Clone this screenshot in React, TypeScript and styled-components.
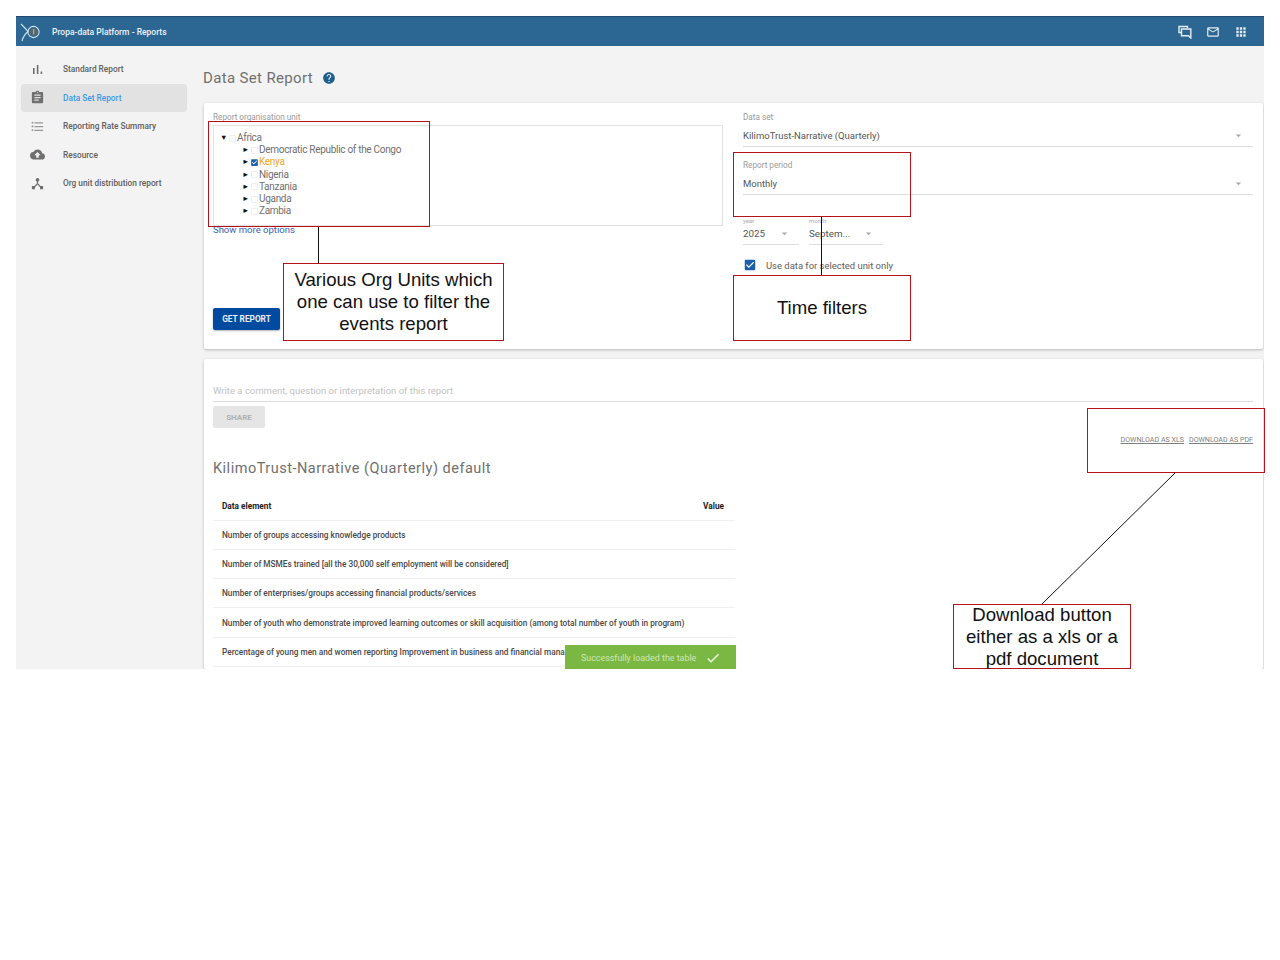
import { createGlobalStyle } from "styled-components";
import styled from "styled-components";
import {
  MdApps,
  MdArrowDropDown,
  MdAssignment,
  MdCheck,
  MdCheckBox,
  MdCloudUpload,
  MdDeviceHub,
  MdFormatListBulleted,
  MdHelp,
  MdMailOutline,
} from "react-icons/md";

const GlobalStyle = createGlobalStyle`
  html, body {
    margin: 0;
    padding: 0;
    background: #fff;
  }
  body {
    font-family: Roboto, "Liberation Sans", sans-serif;
    -webkit-font-smoothing: antialiased;
  }
  * { box-sizing: border-box; }
`;

const Slide = styled.div`
  position: relative;
  width: 1280px;
  height: 960px;
  padding: 16px 16px 0;
  background: #fff;
  overflow: hidden;
`;

const Screen = styled.div`
  width: 1248px;
  height: 653px;
  background: #f3f3f3;
  overflow: hidden;
  display: flex;
  flex-direction: column;
`;

const Header = styled.header`
  height: 30px;
  flex: none;
  display: flex;
  align-items: center;
  background: #2c6693;
  border-top: 1px solid #1d4a6e;
  color: #fff;
  padding: 0 16px 0 3px;
`;

const Brand = styled.div`
  flex: 1;
  display: flex;
  align-items: center;
  gap: 9px;
  font-size: 8.5px;
  font-weight: 500;
  color: #eef3f7;
`;

const HeaderIcons = styled.div`
  display: flex;
  align-items: center;
  gap: 14px;
  font-size: 14px;
  color: #e6eef4;

  svg { display: block; }
`;

const Body = styled.div`
  flex: 1;
  display: flex;
  min-height: 0;
`;

const Sidebar = styled.nav`
  width: 187px;
  flex: none;
  padding: 9px 0 0 5px;
`;

const NavItem = styled.div<{ $active?: boolean }>`
  width: 166px;
  height: 28.5px;
  display: flex;
  align-items: center;
  gap: 18px;
  padding-left: 9px;
  border-radius: 3px;
  font-size: 8.3px;
  font-weight: 500;
  color: ${(p) => (p.$active ? "#3a9ae8" : "#606060")};
  background: ${(p) => (p.$active ? "#e2e2e2" : "transparent")};

  svg {
    flex: none;
    width: 15px;
    height: 15px;
    color: #6f6f6f;
  }
`;

const ListIcon = styled(MdFormatListBulleted)`
  && { color: #9a9a9a; }
`;

const Main = styled.main`
  flex: 1;
  min-width: 0;
  padding: 0 1px 0 0;
`;

const PageTitle = styled.h1`
  height: 57px;
  margin: 0;
  padding-top: 6px;
  display: flex;
  align-items: center;
  gap: 9px;
  font-size: 15px;
  font-weight: 400;
  letter-spacing: 0.35px;
  color: #707070;

  svg {
    width: 14px;
    height: 14px;
    color: #1d5f8e;
  }
`;

const Card = styled.section`
  background: #fff;
  margin-left: 1px;
  box-shadow: 0 1px 3px rgba(0, 0, 0, 0.25);
  border-radius: 2px;
`;

const ReportCard = styled(Card)`
  height: 246px;
  padding: 9px 10px 0 9px;
  display: grid;
  grid-template-columns: 510px 510px;
  column-gap: 20px;
`;

const Column = styled.div`
  display: flex;
  flex-direction: column;
`;

const FieldLabel = styled.div`
  font-size: 8.2px;
  line-height: 10px;
  color: #9a9a9a;
`;

const TreeBox = styled.div`
  height: 101px;
  margin-top: 3px;
  padding: 6px 6px 0;
  border: 1px solid #e2e2e2;
  font-size: 10px;
  letter-spacing: -0.3px;
  line-height: 12.2px;
  color: #6f6f6f;
`;

const TreeRow = styled.div<{ $child?: boolean }>`
  display: flex;
  align-items: center;
  padding-left: ${(p) => (p.$child ? "22px" : "0")};
`;

const Arrow = styled.span`
  width: 9px;
  font-size: 7.5px;
  color: #111;
  flex: none;
`;

const EmptyBox = styled.span`
  width: 7px;
  height: 7px;
  flex: none;
  border: 1px solid #eee;
  border-radius: 1px;
`;

const CheckedIcon = styled(MdCheckBox)`
  width: 9px;
  height: 9px;
  flex: none;
  margin: 0 -1px;
  color: #1c62ad;
`;

const OrgName = styled.span<{ $picked?: boolean }>`
  color: ${(p) => (p.$picked ? "#f5a623" : "inherit")};
  margin-left: 1px;
`;

const MoreLink = styled.a`
  font-size: 9.5px;
  line-height: 8px;
  color: #3b62b8;
`;

const GetReport = styled.button`
  width: 67px;
  height: 22px;
  margin-top: auto;
  margin-bottom: 19px;
  border: 0;
  border-radius: 2px;
  padding: 0;
  background: #004ba0;
  box-shadow: 0 1px 2px rgba(0, 0, 0, 0.3);
  color: #e8eef6;
  font-family: inherit;
  font-size: 8.3px;
  font-weight: 700;
`;

const SelectField = styled.div<{ $top?: number }>`
  margin-top: ${(p) => p.$top ?? 0}px;
`;

const SelectValue = styled.div<{ $mini?: boolean }>`
  display: flex;
  align-items: center;
  justify-content: space-between;
  height: ${(p) => (p.$mini ? "20px" : "25px")};
  padding: ${(p) => (p.$mini ? "0 0 2px" : "2px 0 0")};
  border-bottom: 1px solid #dedede;
  font-size: ${(p) => (p.$mini ? "9.8px" : "9.5px")};
  color: #565656;

  svg {
    width: 13px;
    height: 13px;
    margin-right: 8px;
    color: #aaa;
    flex: none;
  }
`;

const MiniRow = styled.div`
  display: flex;
  gap: 10px;
  margin-top: 22px;
`;

const MiniField = styled.div<{ $width: number }>`
  width: ${(p) => p.$width}px;
`;

const MiniLabel = styled.div`
  height: 8px;
  font-size: 6px;
  line-height: 8px;
  color: #aaa;
`;

const CheckRow = styled.div`
  display: flex;
  align-items: center;
  gap: 9px;
  margin-top: 13px;
  font-size: 9.45px;
  color: #5e5e5e;

  svg {
    width: 14px;
    height: 14px;
    color: #1c5fa8;
  }
`;

const ResultCard = styled(Card)`
  height: 310px;
  margin-top: 10px;
  padding: 26px 10px 0 9px;
  position: relative;
`;

const CommentInput = styled.div`
  height: 17px;
  border-bottom: 1px solid #dcdcdc;
  font-size: 9.5px;
  line-height: 12px;
  color: #c2c2c2;
`;

const ShareButton = styled.button`
  display: block;
  width: 52px;
  height: 22px;
  margin-top: 4px;
  border: 0;
  border-radius: 2px;
  padding: 0;
  background: #e5e5e5;
  color: #b0b0b0;
  font-family: inherit;
  font-size: 8px;
  font-weight: 700;
`;

const Downloads = styled.div`
  display: flex;
  justify-content: flex-end;
  gap: 5px;
  margin-top: 7px;
  height: 10px;
  font-size: 7.1px;
  line-height: 10px;
  color: #808080;

  span { text-decoration: underline; }
`;

const ReportTitle = styled.h2`
  margin: 14px 0 0;
  height: 20px;
  font-size: 14.5px;
  line-height: 20px;
  font-weight: 400;
  letter-spacing: 0.5px;
  color: #707070;
`;

const DataTable = styled.table`
  width: 522px;
  margin-top: 13px;
  border-collapse: collapse;
  font-size: 8.27px;
  color: #4a4a4a;
  font-weight: 500;

  th {
    height: 28px;
    padding: 0 11px 0 9px;
    text-align: left;
    color: #222;
    font-weight: 700;
  }
  th:last-child { text-align: right; }
  td {
    height: 29.3px;
    padding: 0 9px;
    white-space: nowrap;
  }
  tr { border-bottom: 1px solid #f0f0f0; }
`;

const Toast = styled.div`
  position: absolute;
  left: 361px;
  top: 286px;
  width: 171px;
  height: 25px;
  display: flex;
  align-items: center;
  gap: 9px;
  padding: 1px 0 0 16px;
  background: #7ab843;
  color: #cfe6b6;
  font-size: 8.9px;

  svg {
    width: 16px;
    height: 16px;
    color: #eef6e4;
  }
`;

// red callouts drawn over the screenshot
const Callout = styled.div<{ $x: number; $y: number; $w: number; $h: number }>`
  position: absolute;
  left: ${(p) => p.$x}px;
  top: ${(p) => p.$y}px;
  width: ${(p) => p.$w}px;
  height: ${(p) => p.$h}px;
  border: 1px solid #b5121b;
  display: flex;
  align-items: center;
  justify-content: center;
  text-align: center;
  font-family: "Liberation Sans", Arial, sans-serif;
  font-size: 18.6px;
  line-height: 22px;
  color: #111;
`;

const FilledCallout = styled(Callout)`
  background: #fff;
`;

const LeaderLines = styled.svg`
  position: absolute;
  left: 0;
  top: 0;
  pointer-events: none;
`;

const orgUnits = ["Democratic Republic of the Congo", "Kenya", "Nigeria", "Tanzania", "Uganda", "Zambia"];

const dataElements = [
  "Number of groups accessing knowledge products",
  "Number of MSMEs trained [all the 30,000 self employment will be considered]",
  "Number of enterprises/groups accessing financial products/services",
  "Number of youth who demonstrate improved learning outcomes or skill acquisition (among total number of youth in program)",
  "Percentage of young men and women reporting Improvement in business and financial mana",
];

const Logo = () => (
  <svg width="24" height="22" viewBox="0 0 24 22" fill="none">
    <path d="M2 3 C5 6 7 8 9 10.5 C6 13 4 16 3 20" stroke="#cfe0ec" strokeWidth="1.2" />
    <circle cx="14.5" cy="11" r="5.6" stroke="#d5e3ec" strokeWidth="1.1" />
    <circle cx="14.5" cy="11" r="3.8" fill="#4f6b70" />
    <rect x="14" y="8" width="1.2" height="5.5" fill="#d9a441" />
  </svg>
);

const BarsIcon = () => (
  <svg viewBox="0 0 15 15" fill="currentColor">
    <rect x="3" y="6" width="1.6" height="6" />
    <rect x="6.8" y="3" width="1.6" height="9" />
    <rect x="10.6" y="9.5" width="1.6" height="2.5" />
  </svg>
);

const ChatIcon = () => (
  <svg width="14" height="14" viewBox="0 0 14 14" fill="none" stroke="currentColor" strokeWidth="1.4">
    <path d="M9.5 3V1.5H1V7.5H3.5" />
    <path d="M3.5 4H12.8V13L10.4 10.8H3.5Z" />
  </svg>
);

export default function App() {
  return (
    <>
      <GlobalStyle />
      <Slide>
        <Screen>
          <Header>
            <Brand>
              <Logo />
              Propa-data Platform - Reports
            </Brand>
            <HeaderIcons>
              <ChatIcon />
              <MdMailOutline />
              <MdApps />
            </HeaderIcons>
          </Header>
          <Body>
            <Sidebar>
              <NavItem><BarsIcon />Standard Report</NavItem>
              <NavItem $active><MdAssignment />Data Set Report</NavItem>
              <NavItem><ListIcon />Reporting Rate Summary</NavItem>
              <NavItem><MdCloudUpload />Resource</NavItem>
              <NavItem><MdDeviceHub />Org unit distribution report</NavItem>
            </Sidebar>
            <Main>
              <PageTitle>Data Set Report <MdHelp /></PageTitle>
              <ReportCard>
                <Column>
                  <FieldLabel>Report organisation unit</FieldLabel>
                  <TreeBox>
                    <TreeRow>
                      <Arrow>▼</Arrow>
                      <EmptyBox />
                      <OrgName>Africa</OrgName>
                    </TreeRow>
                    {orgUnits.map((name) => (
                      <TreeRow $child key={name}>
                        <Arrow>►</Arrow>
                        {name === "Kenya" ? <CheckedIcon /> : <EmptyBox />}
                        <OrgName $picked={name === "Kenya"}>{name}</OrgName>
                      </TreeRow>
                    ))}
                  </TreeBox>
                  <MoreLink>Show more options</MoreLink>
                  <GetReport>GET REPORT</GetReport>
                </Column>
                <Column>
                  <SelectField>
                    <FieldLabel>Data set</FieldLabel>
                    <SelectValue>KilimoTrust-Narrative (Quarterly)<MdArrowDropDown /></SelectValue>
                  </SelectField>
                  <SelectField $top={13}>
                    <FieldLabel>Report period</FieldLabel>
                    <SelectValue>Monthly<MdArrowDropDown /></SelectValue>
                  </SelectField>
                  <MiniRow>
                    <MiniField $width={56}>
                      <MiniLabel>year</MiniLabel>
                      <SelectValue $mini>2025<MdArrowDropDown /></SelectValue>
                    </MiniField>
                    <MiniField $width={74}>
                      <MiniLabel>month</MiniLabel>
                      <SelectValue $mini>Septem...<MdArrowDropDown /></SelectValue>
                    </MiniField>
                  </MiniRow>
                  <CheckRow><MdCheckBox />Use data for selected unit only</CheckRow>
                </Column>
              </ReportCard>
              <ResultCard>
                <CommentInput>Write a comment, question or interpretation of this report</CommentInput>
                <ShareButton>SHARE</ShareButton>
                <Downloads>
                  <span>DOWNLOAD AS XLS</span>
                  <span>DOWNLOAD AS PDF</span>
                </Downloads>
                <ReportTitle>KilimoTrust-Narrative (Quarterly) default</ReportTitle>
                <DataTable>
                  <thead>
                    <tr><th>Data element</th><th>Value</th></tr>
                  </thead>
                  <tbody>
                    {dataElements.map((el) => (
                      <tr key={el}><td colSpan={2}>{el}</td></tr>
                    ))}
                  </tbody>
                </DataTable>
                <Toast>Successfully loaded the table <MdCheck /></Toast>
              </ResultCard>
            </Main>
          </Body>
        </Screen>

        <LeaderLines width="1280" height="960">
          <line x1="318.5" y1="227" x2="318.5" y2="263" stroke="#111" strokeWidth="1" />
          <line x1="821.5" y1="217" x2="821.5" y2="275" stroke="#111" strokeWidth="1" />
          <line x1="1175" y1="473" x2="1042" y2="604" stroke="#111" strokeWidth="1" />
        </LeaderLines>
        <Callout $x={208} $y={121} $w={222} $h={106} />
        <Callout $x={733} $y={152} $w={178} $h={65} />
        <Callout $x={1087} $y={408} $w={178} $h={65} />
        <FilledCallout $x={283} $y={263} $w={221} $h={78}>
          Various Org Units which<br />one can use to filter the<br />events report
        </FilledCallout>
        <FilledCallout $x={733} $y={275} $w={178} $h={66}>Time filters</FilledCallout>
        <FilledCallout $x={953} $y={604} $w={178} $h={65}>
          Download button<br />either as a xls or a<br />pdf document
        </FilledCallout>
      </Slide>
    </>
  );
}
